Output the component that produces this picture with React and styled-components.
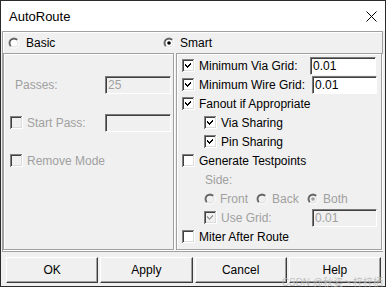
import React from "react";
import styled, { createGlobalStyle } from "styled-components";

const GlobalStyle = createGlobalStyle`
  html, body {
    margin: 0;
    padding: 0;
    background: #ffffff;
  }
  body {
    font-family: "Liberation Sans", Arial, sans-serif;
    font-size: 12px;
    color: #000;
  }
`;

const Window = styled.div`
  position: relative;
  width: 386px;
  height: 287px;
  box-sizing: border-box;
  border: 1px solid #2b2b2b;
  background: #f0f0f0;
  display: flex;
  flex-direction: column;
`;

const TitleBar = styled.div`
  height: 30px;
  background: #ffffff;
  display: flex;
  align-items: center;
  justify-content: space-between;
  padding: 0 8px 0 8px;
  font-size: 13px;
`;

const Body = styled.div`
  flex: 1;
  display: flex;
  flex-direction: column;
  padding: 0 2px 0 1px;
`;

const Frame = styled.div`
  border: 1px solid #a0a0a0;
  box-shadow: inset 1px 1px #ffffff;
  display: flex;
  flex-direction: column;
  padding-bottom: 1px;
`;

const ModeRow = styled.div`
  height: 20px;
  display: grid;
  grid-template-columns: 155px 1fr;
  align-items: center;
  padding: 1px 0 0 5px;
`;

const Panels = styled.div`
  display: grid;
  grid-template-columns: 171px 1fr;
  gap: 2px;
  height: 197px;
`;

const Panel = styled.div`
  border: 1px solid #a0a0a0;
  box-shadow: inset 1px 1px #ffffff, 1px 1px #ffffff;
  padding: 2px 0 0 5px;
  display: flex;
  flex-direction: column;
`;

const Row = styled.div`
  height: 19px;
  display: flex;
  align-items: center;
  gap: 4px;
  padding-left: ${(p) => p.$indent || 0}px;
  color: ${(p) => (p.$disabled ? "#a0a0a0" : "#000")};
`;

const Label = styled.span`
  white-space: nowrap;
`;

const Field = styled.div`
  box-sizing: border-box;
  width: ${(p) => p.$width || 66}px;
  height: 18px;
  margin-left: auto;
  margin-right: ${(p) => p.$right || 3}px;
  border: 1px solid;
  border-color: #7a7a7a #ffffff #ffffff #7a7a7a;
  box-shadow: inset 1px 1px #404040;
  background: ${(p) => (p.$disabled ? "#f0f0f0" : "#ffffff")};
  color: ${(p) => (p.$disabled ? "#a0a0a0" : "#000")};
  padding: 1px 0 0 2px;
  line-height: 15px;
`;

const Choice = styled.span`
  display: inline-flex;
  align-items: center;
  gap: ${(p) => p.$gap || 4}px;
  color: ${(p) => (p.$disabled ? "#a0a0a0" : "#000")};
`;

const ChoiceGroup = styled.div`
  display: grid;
  grid-template-columns: 52px 51px 1fr;
  align-items: center;
`;

const ButtonRow = styled.div`
  display: grid;
  grid-template-columns: repeat(4, 1fr);
  gap: 2px;
  padding: 5px 2px 0 4px;
`;

const Button = styled.div`
  box-sizing: border-box;
  height: 26px;
  display: flex;
  align-items: center;
  justify-content: center;
  border: 1px solid;
  border-color: #ffffff #3c3c3c #3c3c3c #ffffff;
  box-shadow: inset -1px -1px #a0a0a0;
  font-size: 12px;
  line-height: 12px;
`;

const Watermark = styled.div`
  position: absolute;
  right: 2px;
  bottom: -2px;
  font-size: 10px;
  line-height: 10px;
  color: rgba(185, 185, 185, 0.85);
  font-family: "Liberation Sans", "Noto Sans CJK SC", sans-serif;
  white-space: nowrap;
`;

const CloseIcon = () => (
  <svg width="11" height="11" viewBox="0 0 11 11">
    <path d="M0.5 0.5 L10.5 10.5 M10.5 0.5 L0.5 10.5" stroke="#000" strokeWidth="1" />
  </svg>
);

const CheckBox = ({ checked, disabled }) => (
  <svg width="13" height="13" viewBox="0 0 13 13" shapeRendering="crispEdges">
    <rect x="0" y="0" width="13" height="13" fill={disabled ? "#f0f0f0" : "#fff"} />
    <path d="M0 12.5 V0.5 H12.5" stroke="#808080" fill="none" />
    <path d="M1 11.5 V1.5 H11.5" stroke="#404040" fill="none" />
    <path d="M0.5 12.5 H12.5 V0" stroke="#ffffff" fill="none" />
    <path d="M1.5 11.5 H11.5 V1" stroke="#dcdcdc" fill="none" />
    {checked && (
      <path
        d="M3 5 L5 7 L9 3 V5 L5 9 L3 7 Z"
        fill={disabled ? "#a0a0a0" : "#000"}
      />
    )}
  </svg>
);

const Radio = ({ checked, disabled }) => (
  <svg width="12" height="12" viewBox="0 0 12 12">
    <defs>
      <linearGradient id="rg" x1="0" y1="0" x2="1" y2="1">
        <stop offset="0.45" stopColor="#808080" />
        <stop offset="0.55" stopColor="#ffffff" />
      </linearGradient>
      <linearGradient id="rg2" x1="0" y1="0" x2="1" y2="1">
        <stop offset="0.45" stopColor="#404040" />
        <stop offset="0.55" stopColor="#dcdcdc" />
      </linearGradient>
    </defs>
    <circle cx="6" cy="6" r="5.5" fill="url(#rg)" />
    <circle cx="6" cy="6" r="4.5" fill="url(#rg2)" />
    <circle cx="6" cy="6" r="3.6" fill={disabled ? "#f0f0f0" : "#ffffff"} />
    {checked && <circle cx="6" cy="6" r="1.8" fill={disabled ? "#a0a0a0" : "#000"} />}
  </svg>
);

const App = () => {
  return (
    <>
      <GlobalStyle />
      <Window>
        <TitleBar>
          <span>AutoRoute</span>
          <CloseIcon />
        </TitleBar>
        <Body>
          <Frame>
            <ModeRow>
              <Choice $gap={6}>
                <Radio />
                Basic
              </Choice>
              <Choice $gap={5}>
                <Radio checked />
                Smart
              </Choice>
            </ModeRow>
            <Panels>
              <Panel>
                <Row />
                <Row $disabled $indent={6}>
                  <Label>Passes:</Label>
                  <Field $disabled $right={2}>25</Field>
                </Row>
                <Row />
                <Row $disabled $indent={1}>
                  <CheckBox disabled />
                  <Label>Start Pass:</Label>
                  <Field $disabled $right={2} />
                </Row>
                <Row />
                <Row $disabled $indent={1}>
                  <CheckBox disabled />
                  <Label>Remove Mode</Label>
                </Row>
              </Panel>
              <Panel>
                <Row>
                  <CheckBox checked />
                  <Label>Minimum Via Grid:</Label>
                  <Field $right={5}>0.01</Field>
                </Row>
                <Row>
                  <CheckBox checked />
                  <Label>Minimum Wire Grid:</Label>
                  <Field $right={4} $width={65}>0.01</Field>
                </Row>
                <Row>
                  <CheckBox checked />
                  <Label>Fanout if Appropriate</Label>
                </Row>
                <Row $indent={22}>
                  <CheckBox checked />
                  <Label>Via Sharing</Label>
                </Row>
                <Row $indent={22}>
                  <CheckBox checked />
                  <Label>Pin Sharing</Label>
                </Row>
                <Row>
                  <CheckBox />
                  <Label>Generate Testpoints</Label>
                </Row>
                <Row $disabled $indent={23}>
                  <Label>Side:</Label>
                </Row>
                <Row $disabled $indent={22}>
                  <ChoiceGroup>
                    <Choice $disabled>
                      <Radio disabled />
                      Front
                    </Choice>
                    <Choice $disabled>
                      <Radio disabled />
                      Back
                    </Choice>
                    <Choice $disabled>
                      <Radio disabled checked />
                      Both
                    </Choice>
                  </ChoiceGroup>
                </Row>
                <Row $disabled $indent={22}>
                  <CheckBox checked disabled />
                  <Label>Use Grid:</Label>
                  <Field $disabled $right={4} $width={65}>0.01</Field>
                </Row>
                <Row>
                  <CheckBox />
                  <Label>Miter After Route</Label>
                </Row>
              </Panel>
            </Panels>
          </Frame>
          <ButtonRow>
            <Button>OK</Button>
            <Button>Apply</Button>
            <Button>Cancel</Button>
            <Button>Help</Button>
          </ButtonRow>
        </Body>
        <Watermark>CSDN @秋姿丶梓梓栖</Watermark>
      </Window>
    </>
  );
};

export default App;
